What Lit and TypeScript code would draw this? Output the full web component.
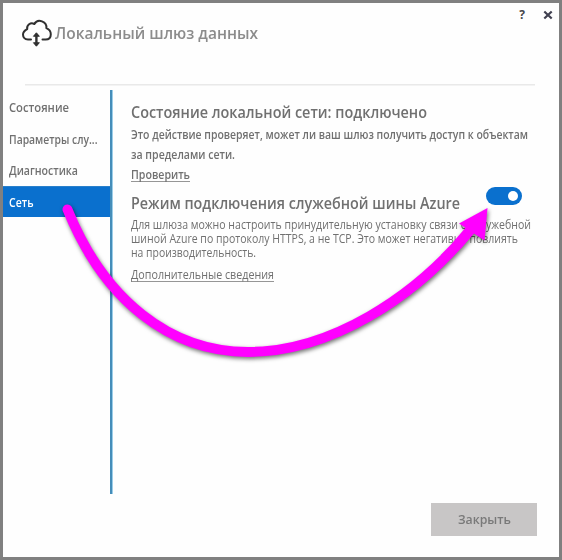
import { LitElement, html, css } from "lit";
import { customElement, property, state } from "lit/decorators.js";

/** One line of text condensed horizontally to a given width. */
@customElement("fit-line")
export class FitLine extends LitElement {
  static styles = css`
    :host { display: block; white-space: nowrap; }
    .text { display: inline-block; transform-origin: 0 50%; vertical-align: top; }
  `;
  @property({ type: Number }) width = 100;
  @property() text = "";

  updated() {
    const el = this.renderRoot.querySelector(".text") as HTMLElement;
    el.style.transform = "none";
    const natural = el.getBoundingClientRect().width;
    this.style.width = `${this.width}px`;
    if (natural) el.style.transform = `scaleX(${this.width / natural})`;
  }
  render() {
    return html`<span class="text">${this.text}</span>`;
  }
}

@customElement("app-root")
export class AppRoot extends LitElement {
  static styles = css`
    :host { display: block; }
    * { box-sizing: border-box; }
    .window {
      position: relative; width: 562px; height: 560px; overflow: hidden;
      border: 3px solid #808080; background: #fefefe; color: #707070;
      font-family: "Open Sans", "Noto Sans", sans-serif;
      display: flex; flex-direction: column;
    }
    .header { height: 81px; padding: 0 6px 0 18px; display: flex; justify-content: space-between; flex: none; }
    .brand { display: flex; height: 50px; padding-top: 15px; }
    .title { font-size: 16px; line-height: 22px; font-weight: 600; color: #8c8c8c; margin: 4px 0 0 2px; }
    .controls { display: flex; gap: 18px; padding-top: 4px; font-size: 12px; line-height: 16px; font-weight: 700; color: #46464b; }
    .controls svg { margin-top: 3px; }
    .rule { height: 1px; margin: 0 24px 0 22px; background: #e9e9e9; flex: none; box-shadow: 0 1px 0 #f3f3f3; }
    .body { display: flex; height: 404px; margin-top: 5px; flex: none; }
    nav { width: 107px; padding-top: 1px; flex: none; }
    .item { height: 31.5px; line-height: 34px; padding-left: 6px; font-size: 12.5px; font-weight: 600; }
    .item.active { background: #0a70ce; color: #fff; border-top: 1px solid #2a80cb; line-height: 32px; }
    .bar { width: 3px; background: #458db9; border-right: 1px solid #9bcde8; flex: none; }
    main { padding: 12px 0 0 18px; }
    h2 { margin: 0; font-size: 16px; line-height: 20px; font-weight: 600; }
    .check { font-size: 12px; line-height: 20px; font-weight: 600; padding-top: 3px; }
    .note { font-size: 12px; line-height: 14px; padding-top: 5px; }
    .link { border-bottom: 1px solid #969696; }
    .check .link { line-height: 16px; height: 15px; margin-top: 2px; }
    .note .link { margin-top: 8px; line-height: 13px; }
    .group { display: flex; align-items: flex-end; gap: 26px; height: 31px; position: relative; }
    .toggle {
      width: 36px; height: 18px; border-radius: 9px; margin: 0 0 8px 0; background: #0a70ce; border: 0;
      padding: 0 4px; display: flex; align-items: center; justify-content: flex-end;
    }
    .knob { width: 10px; height: 10px; border-radius: 50%; background: #fff; }
    .close {
      align-self: flex-end; margin: 9px 22px 0 0; width: 106px; height: 33px; border: 0; background: #c8c6c6;
      color: #797979; font: 600 13px/32px "Open Sans", sans-serif; padding: 0; display: flex; justify-content: center;
    }
    .arrow { position: absolute; left: -3px; top: -3px; pointer-events: none; filter: drop-shadow(1px 2px 2px rgba(0,0,0,.55)); }
  `;

  @state() private active = 3;
  private items: [string, number][] = [["Состояние", 60], ["Параметры слу...", 88.5], ["Диагностика", 69], ["Сеть", 24.5]];

  render() {
    return html`
      <div class="window">
        <div class="header">
          <div class="brand">
            <svg width="32" height="30" viewBox="0 0 32 30" fill="none" stroke="#303030" stroke-width="2" stroke-linecap="round" stroke-linejoin="round">
              <path d="M10 21.500H7C3.500 21.500 2 18.800 2 16.600C2 13.800 4.200 12.300 6.200 11.200C5.500 7 9.500 4 13.400 6C15 3.200 18 2.200 21 3.400C24.400 4.700 25.700 7.500 25.400 10.200C28.300 11.400 29.800 13.800 29.800 16.200C29.800 19.300 27.800 21.500 24.600 21.500H21.500" />
              <path d="M15.400 17V26" stroke-width="2.400" />
              <path d="M12.700 18L15.400 14.800L18.100 18ZM12.700 25L15.400 28.200L18.100 25Z" fill="#303030" stroke-width="1" />
            </svg>
            <fit-line class="title" width="203" text="Локальный шлюз данных"></fit-line>
          </div>
          <div class="controls">
            <span>?</span>
            <svg width="10" height="10" viewBox="0 0 10 10" stroke="#404050" stroke-width="2.200"><path d="M1.300 1.500L8.700 8.500M8.700 1.500L1.300 8.500" /></svg>
          </div>
        </div>
        <div class="rule"></div>
        <div class="body">
          <nav>
            ${this.items.map(([t, w], i) => html`<div class="item ${i === this.active ? "active" : ""}" @click=${() => (this.active = i)}><fit-line width=${w} text=${t}></fit-line></div>`)}
          </nav>
          <div class="bar"></div>
          <main>
            <h2><fit-line width="296" text="Состояние локальной сети: подключено"></fit-line></h2>
            <div class="check">
              <fit-line width="397" text="Это действие проверяет, может ли ваш шлюз получить доступ к объектам"></fit-line>
              <fit-line width="104" text="за пределами сети."></fit-line>
              <fit-line class="link" width="59" text="Проверить"></fit-line>
            </div>
            <div class="group">
              <h2><fit-line width="329" text="Режим подключения служебной шины Azure"></fit-line></h2>
              <button class="toggle" aria-label="Azure"><span class="knob"></span></button>
            </div>
            <div class="note">
              <fit-line width="400" text="Для шлюза можно настроить принудительную установку связи со служебной"></fit-line>
              <fit-line width="387" text="шиной Azure по протоколу HTTPS, а не TCP. Это может негативно повлиять"></fit-line>
              <fit-line width="125" text="на производительность."></fit-line>
              <fit-line class="link" width="143" text="Дополнительные сведения"></fit-line>
            </div>
          </main>
        </div>
        <button class="close"><fit-line width="53" text="Закрыть"></fit-line></button>
        <svg class="arrow" width="562" height="560" viewBox="0 0 562 560">
          <path d="M67.500 209.500C104 300 170 352 248 352C330 352 415 298 472 228" fill="none" stroke="#ff00ff" stroke-width="10" stroke-linecap="round" />
          <path d="M487.500 208L459 223.500L484.500 240.500Z" fill="#ff00ff" />
        </svg>
      </div>`;
  }
}
